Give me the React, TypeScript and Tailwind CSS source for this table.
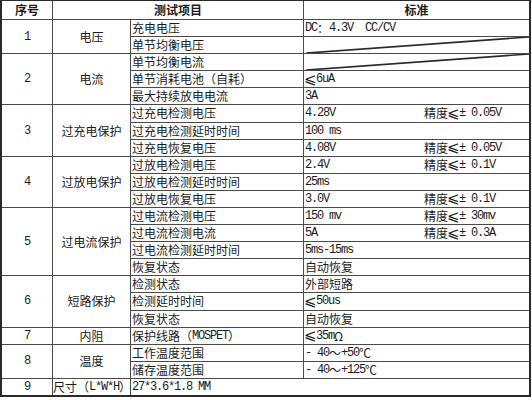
import React from "react";

const mono = "font-['Liberation_Mono','Noto_Sans_CJK_SC',monospace] text-[12px] tracking-[-1.2px]";

const Le = () => (
  <span className="font-['DejaVu_Sans','Noto_Sans_CJK_SC',sans-serif] text-[15px] leading-none w-[12px] -ml-[1px]">⩽</span>
);

const M = ({ children }: { children: React.ReactNode }) => <span className={mono}>{children}</span>;

function Num({ n, span = "" }: { n: string; span?: string }) {
  return (
    <div className={`bg-white flex items-center justify-center ${span}`}>
      <span className={mono}>{n}</span>
    </div>
  );
}

function Cat({ children, span = "" }: { children: React.ReactNode; span?: string }) {
  return <div className={`bg-white flex items-center justify-center ${span}`}>{children}</div>;
}

function Item({ children, span = "" }: { children: React.ReactNode; span?: string }) {
  return <div className={`bg-white flex items-center pl-[1px] whitespace-nowrap ${span}`}>{children}</div>;
}

function Std({ children, acc }: { children?: React.ReactNode; acc?: string }) {
  return (
    <div className="bg-white flex items-center pl-[1px] whitespace-nowrap">
      <span className="w-[119px] shrink-0 flex items-center">{children}</span>
      {acc && (
        <span className="flex items-center">
          精度<Le />
          <M>{acc}</M>
        </span>
      )}
    </div>
  );
}

function Diag() {
  return (
    <div className="bg-white relative">
      <svg className="absolute inset-0 w-full h-full" viewBox="0 0 100 100" preserveAspectRatio="none">
        <line x1="1" y1="100" x2="100" y2="0" stroke="#2a2a2a" strokeWidth="1.6" vectorEffect="non-scaling-stroke" />
      </svg>
    </div>
  );
}

export default function App() {
  return (
    <div className="w-[532px] h-[400px] bg-white">
      <div className="w-[531px] h-[397px] border-x-2 border-b-2 border-t border-[#2a2a2a] bg-[#4a4a4a]">
        <div className="grid h-full grid-cols-[50px_77px_172px_1fr] grid-rows-[18px_repeat(22,minmax(0,1fr))] gap-px font-['Noto_Sans_CJK_SC',sans-serif] text-[12px] leading-[16px] text-[#1c1c1c]">
          {/* header */}
          <div className="bg-white flex items-center justify-center font-bold">序号</div>
          <div className="bg-white col-span-2 flex items-center justify-center font-bold">测试项目</div>
          <div className="bg-white flex items-center justify-center font-bold">标准</div>

          {/* 1 */}
          <Num n="1" span="row-span-2" />
          <Cat span="row-span-2">电压</Cat>
          <Item>充电电压</Item>
          <Std>
            <M>DC</M>：<M>4.3V&nbsp;&nbsp;CC/CV</M>
          </Std>
          <Item>单节均衡电压</Item>
          <Diag />

          {/* 2 */}
          <Num n="2" span="row-span-3" />
          <Cat span="row-span-3">电流</Cat>
          <Item>单节均衡电流</Item>
          <Diag />
          <Item>单节消耗电池（自耗）</Item>
          <Std>
            <Le />
            <M>6uA</M>
          </Std>
          <Item>最大持续放电电流</Item>
          <Std>
            <M>3A</M>
          </Std>

          {/* 3 */}
          <Num n="3" span="row-span-3" />
          <Cat span="row-span-3">过充电保护</Cat>
          <Item>过充电检测电压</Item>
          <Std acc="± 0.05V">
            <M>4.28V</M>
          </Std>
          <Item>过充电检测延时时间</Item>
          <Std>
            <M>100 ms</M>
          </Std>
          <Item>过充电恢复电压</Item>
          <Std acc="± 0.05V">
            <M>4.08V</M>
          </Std>

          {/* 4 */}
          <Num n="4" span="row-span-3" />
          <Cat span="row-span-3">过放电保护</Cat>
          <Item>过放电检测电压</Item>
          <Std acc="± 0.1V">
            <M>2.4V</M>
          </Std>
          <Item>过放电检测延时时间</Item>
          <Std>
            <M>25ms</M>
          </Std>
          <Item>过放电恢复电压</Item>
          <Std acc="± 0.1V">
            <M>3.0V</M>
          </Std>

          {/* 5 */}
          <Num n="5" span="row-span-4" />
          <Cat span="row-span-4">过电流保护</Cat>
          <Item>过电流检测电压</Item>
          <Std acc="± 30mv">
            <M>150 mv</M>
          </Std>
          <Item>过电流检测电流</Item>
          <Std acc="± 0.3A">
            <M>5A</M>
          </Std>
          <Item>过电流检测延时时间</Item>
          <Std>
            <M>5ms-15ms</M>
          </Std>
          <Item>恢复状态</Item>
          <Std>自动恢复</Std>

          {/* 6 */}
          <Num n="6" span="row-span-3" />
          <Cat span="row-span-3">短路保护</Cat>
          <Item>检测状态</Item>
          <Std>外部短路</Std>
          <Item>检测延时时间</Item>
          <Std>
            <Le />
            <M>50us</M>
          </Std>
          <Item>恢复状态</Item>
          <Std>自动恢复</Std>

          {/* 7 */}
          <Num n="7" />
          <Cat>内阻</Cat>
          <Item>
            保护线路（<M>MOSPET</M>）
          </Item>
          <Std>
            <Le />
            <M>35m</M>Ω
          </Std>

          {/* 8 */}
          <Num n="8" span="row-span-2" />
          <Cat span="row-span-2">温度</Cat>
          <Item>工作温度范围</Item>
          <Std>
            <M>- 40</M>～<M>+50</M>℃
          </Std>
          <Item>储存温度范围</Item>
          <Std>
            <M>- 40</M>～<M>+125</M>℃
          </Std>

          {/* 9 */}
          <Num n="9" />
          <div className="bg-white flex items-center whitespace-nowrap">
            尺寸（<M>L*W*H</M>）
          </div>
          <Item span="col-span-2">
            <M>27*3.6*1.8 MM</M>
          </Item>
        </div>
      </div>
    </div>
  );
}
